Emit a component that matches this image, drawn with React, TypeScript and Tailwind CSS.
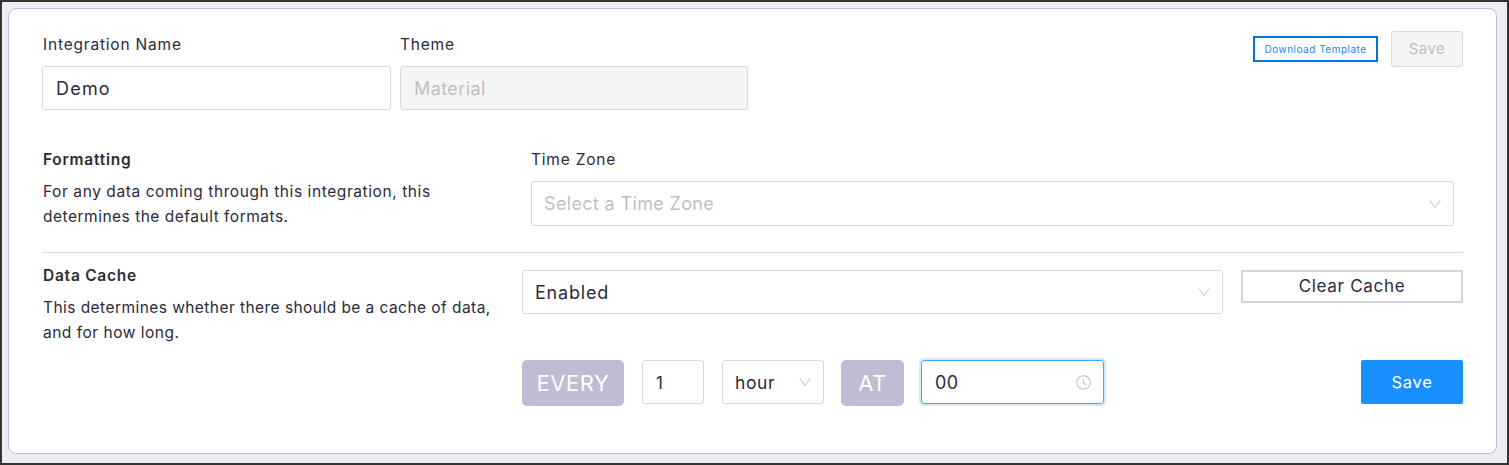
const font = "font-['Inter','Liberation_Sans',sans-serif]";

function Chevron({ className = "" }: { className?: string }) {
  return (
    <svg viewBox="0 0 12 12" className={`w-3 h-3 text-[#bfbfbf] ${className}`} fill="none" stroke="currentColor" strokeWidth="1">
      <path d="M0.8 2.5 L6 9.5 L11.2 2.5" />
    </svg>
  );
}

function ClockIcon() {
  return (
    <svg viewBox="0 0 14 14" className="w-[15px] h-[15px] text-[#bfbfbf]" fill="none" stroke="currentColor" strokeWidth="1">
      <circle cx="7" cy="7" r="6.3" />
      <path d="M7 3.4 V7.3 L9.4 9.2" />
    </svg>
  );
}

function Label({ children }: { children: string }) {
  return <div className="text-[15.5px] leading-[22px] tracking-[0.8px] text-[#2b2b3b]">{children}</div>;
}

function Heading({ children }: { children: string }) {
  return <div className="text-[15.5px] leading-[22px] font-semibold tracking-[0.75px] text-[#2b2b3b]">{children}</div>;
}

function SelectBox({ value, placeholder, className = "" }: { value?: string; placeholder?: string; className?: string }) {
  return (
    <div className={`flex items-center justify-between border border-[#d9d9d9] rounded-[3px] bg-white pl-3 pr-[12px] ${className}`}>
      {value ? (
        <span className="pt-px text-[18px] tracking-[0.8px] text-[#2b2b3b]">{value}</span>
      ) : (
        <span className="text-[18px] tracking-[0.35px] text-[#bfbfbf]">{placeholder}</span>
      )}
      <Chevron />
    </div>
  );
}

function Tag({ children, className = "" }: { children: string; className?: string }) {
  return (
    <div className={`h-[46px] flex items-center justify-center rounded-[5px] bg-[#bebdd3] text-white text-[22px] tracking-[0.6px] ${className}`}>
      {children}
    </div>
  );
}

export default function App() {
  return (
    <div className={`w-[1509px] h-[465px] border-2 border-[#333333] bg-[#ebedf3] pt-[6px] pl-[6px] pr-[10px] ${font}`}>
      <div className="w-[1489px] h-[446px] border border-[#c0bfd6] rounded-[8px] bg-white pl-[33px] pr-[33px] pt-[21px]">
        <div className="flex justify-between items-start">
          <div className="flex gap-[9px]">
            <div className="w-[349px]">
              <div className="pl-px h-[36px] pt-[4px]">
                <Label>Integration Name</Label>
              </div>
              <input
                readOnly
                value="Demo"
                className="w-full h-[44px] border border-[#d9d9d9] rounded-[3px] px-[13px] text-[18px] tracking-[1.2px] text-[#2b2b3b] outline-none"
              />
            </div>
            <div className="w-[348px]">
              <div className="h-[36px] pt-[4px]">
                <Label>Theme</Label>
              </div>
              <input
                readOnly
                disabled
                value="Material"
                className="w-full h-[44px] border border-[#d9d9d9] rounded-[3px] bg-[#f5f5f5] px-[13px] text-[18px] tracking-[0.4px] text-[#bfbfbf] outline-none"
              />
            </div>
          </div>
          <div className="flex items-center gap-[13px] pt-[1px]">
            <button className="w-[125px] h-[26px] border-2 border-[#0073e6] pt-px text-[#2f80ed] text-[10px] tracking-[0.5px]">Download Template</button>
            <button className="w-[72px] h-[36px] border border-[#d9d9d9] rounded-[3px] bg-[#f5f5f5] pt-px text-[#bfbfbf] text-[15px] tracking-[0.5px]">Save</button>
          </div>
        </div>

        <div className="flex mt-[38px]">
          <div className="w-[489px] pl-px pt-px">
            <Heading>Formatting</Heading>
            <div className="mt-[8px] text-[15.5px] leading-[25px] text-[#2b2b3b]">
              <div className="tracking-[0.58px]">For any data coming through this integration, this</div>
              <div className="tracking-[0.5px]">determines the default formats.</div>
            </div>
          </div>
          <div className="w-[923px]">
            <div className="pt-px">
              <Label>Time Zone</Label>
            </div>
            <SelectBox placeholder="Select a Time Zone" className="h-[45px] mt-[10px]" />
          </div>
        </div>

        <div className="h-px bg-[#d9d9d9] mt-[23px]"></div>

        <div className="flex mt-[17px]">
          <div className="w-[480px] pl-px -mt-[5px]">
            <Heading>Data Cache</Heading>
            <div className="mt-[8px] text-[15.5px] leading-[25px] text-[#2b2b3b]">
              <div className="tracking-[0.44px]">This determines whether there should be a cache of data,</div>
              <div className="tracking-[0.5px]">and for how long.</div>
            </div>
          </div>
          <div className="flex-1">
            <div className="flex items-start gap-[18px]">
              <SelectBox value="Enabled" className="w-[701px] h-[44px]" />
              <button className="w-[222px] h-[33px] border-2 border-[#d2d2d8] pt-px text-[17px] tracking-[0.7px] text-[#2b2b3b]">Clear Cache</button>
            </div>
            <div className="flex items-start mt-[46px]">
              <Tag className="w-[102px]">EVERY</Tag>
              <input
                readOnly
                value="1"
                className="w-[62px] h-[44px] ml-[18px] border border-[#d9d9d9] rounded-[3px] px-[13px] pt-px text-[17px] text-[#2b2b3b] outline-none"
              />
              <div className="w-[102px] h-[44px] ml-[18px] flex items-center justify-between border border-[#d9d9d9] rounded-[3px] pl-3 pr-[12px]">
                <span className="pt-[3px] text-[17.5px] tracking-[0.6px] text-[#2b2b3b]">hour</span>
                <Chevron />
              </div>
              <Tag className="w-[63px] ml-[17px]">AT</Tag>
              <div className="w-[183px] h-[44px] ml-[17px] flex items-center justify-between border border-[#40a9ff] rounded-[3px] shadow-[0_0_0_2px_rgba(24,144,255,0.2)] pl-[13px] pr-[12px]">
                <span className="pt-px text-[18px] tracking-[0.5px] text-[#2b2b3b]">00</span>
                <ClockIcon />
              </div>
              <button className="w-[102px] h-[44px] ml-auto rounded-[2px] bg-[#1890ff] pt-px text-white text-[16.5px] tracking-[0.7px]">Save</button>
            </div>
          </div>
        </div>
      </div>
    </div>
  );
}
